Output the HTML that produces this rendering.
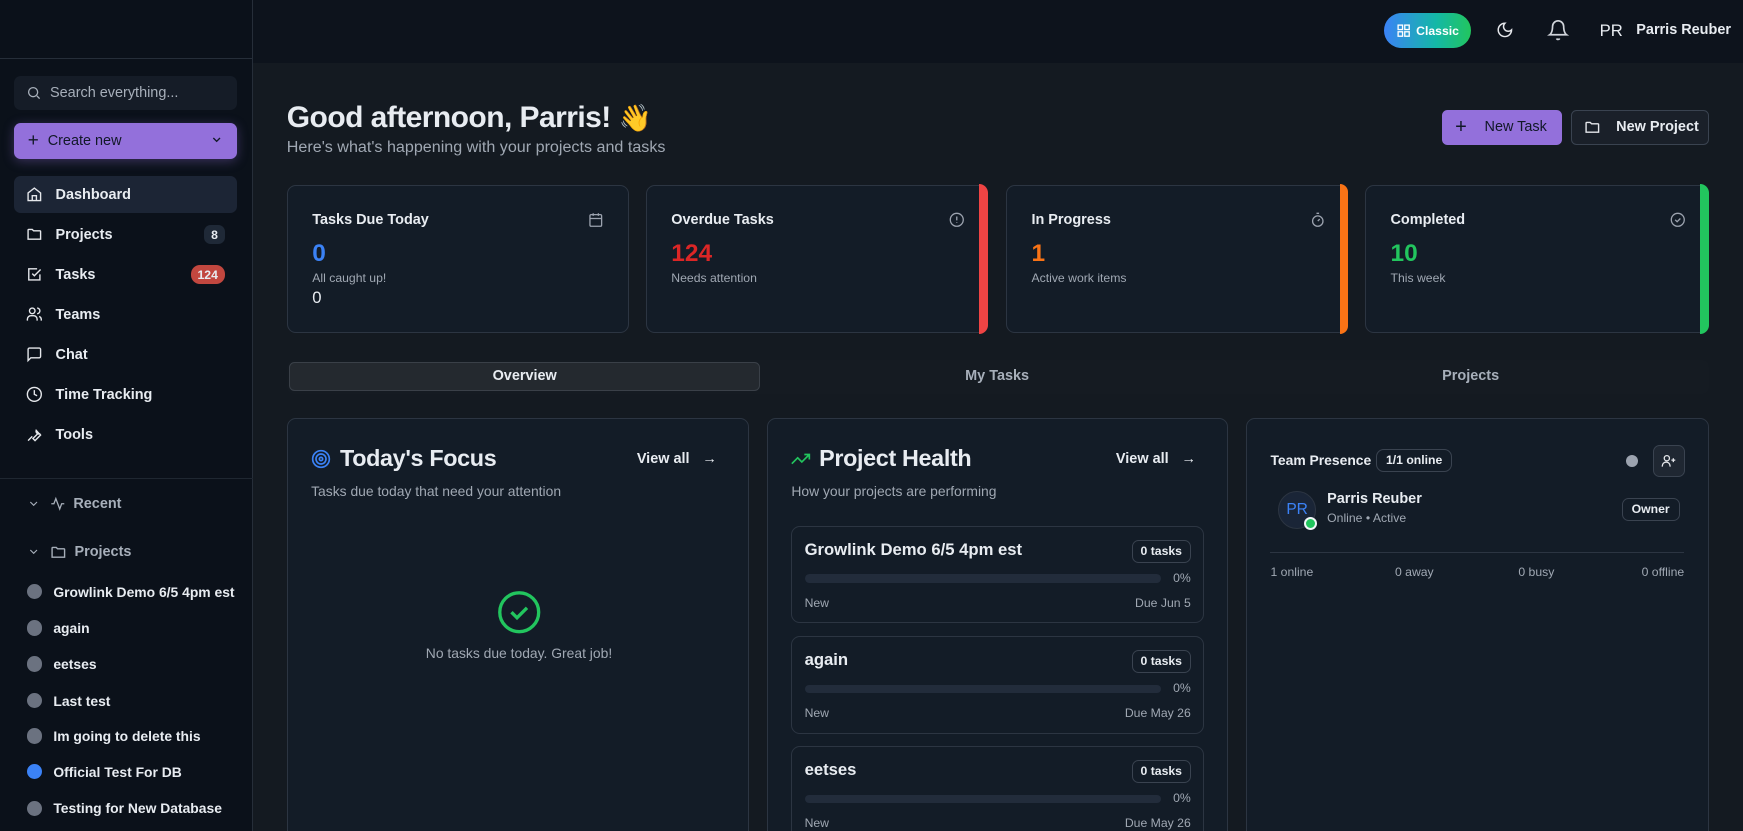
<!DOCTYPE html>
<html><head><meta charset="utf-8"><style>
*{box-sizing:border-box;margin:0;padding:0}
html,body{width:1743px;height:831px;overflow:hidden;background:#131920}
#z{zoom:1.11161;width:1568px;height:748px;position:relative;font-family:"Liberation Sans",sans-serif;color:#e8ecf1;background:#141a21;overflow:hidden}
.a{position:absolute}
.sb{left:0;top:0;width:228px;height:748px;background:#0b111a;border-right:1px solid #262e39}
.ni{position:absolute;left:13px;width:200px;height:34px;display:flex;align-items:center;font-size:13px;font-weight:bold;padding-left:10px}
.ni svg{margin-right:12px}
.pi{position:absolute;left:24px;font-size:12.5px;font-weight:bold;display:flex;align-items:center;white-space:nowrap}
.pi i{width:14px;height:14px;border-radius:50%;background:#6b7280;margin-right:10px;display:inline-block}
.card{background:#131c27;border:1px solid #2c3542;border-radius:8px;position:absolute}
.ct{font-size:13px;font-weight:bold;position:absolute;left:22px;top:24px}
.cn{font-size:22px;font-weight:bold;position:absolute;left:22px;top:49px}
.cs{font-size:11px;color:#a0a8b3;position:absolute;left:22px;top:77px}
.bar{position:absolute;right:-1px;top:-1px;bottom:-1px;width:8px;border-radius:0 8px 8px 0}
.ico{position:absolute;right:22px;top:24px}
.ph{position:absolute;left:21px;right:21px;height:88px;border:1px solid #2c3542;border-radius:8px}
.ph .n{position:absolute;left:11px;top:12px;font-size:15px;font-weight:bold}
.ph .b{position:absolute;right:11px;top:12px;font-size:11px;font-weight:bold;border:1px solid #3a4350;border-radius:6px;padding:3px 7px}
.ph .p{position:absolute;left:11px;right:38px;top:43px;height:8px;border-radius:4px;background:#222c3b}
.ph .pc{position:absolute;right:11px;top:40px;font-size:11px;color:#a0a8b3}
.ph .l{position:absolute;left:11px;top:62px;font-size:11px;color:#a0a8b3}
.ph .r{position:absolute;right:11px;top:62px;font-size:11px;color:#a0a8b3}
</style></head><body><div id="z">
<div class="a" style="left:228px;top:0;width:1340px;height:57px;background:#0d131c"></div>
<div class="a" style="left:1245px;top:12px;width:78px;height:31px;border-radius:16px;background:linear-gradient(90deg,#3b82f6,#14b8a6 60%,#22c55e);font-size:11px;font-weight:bold;display:flex;align-items:center;padding-left:12px;color:#fff">
<svg width="12" height="12" viewBox="0 0 12 12" fill="none" stroke="#fff" stroke-width="1.2" style="margin-right:5px"><rect x="1" y="1" width="4" height="4"/><rect x="7" y="1" width="4" height="4"/><rect x="1" y="7" width="4" height="4"/><rect x="7" y="7" width="4" height="4"/></svg>Classic</div>
<svg class="a" style="left:1346px;top:19px" width="16" height="16" viewBox="0 0 24 24" fill="none" stroke="#e5e7eb" stroke-width="2"><path d="M12 3a6 6 0 0 0 9 9 9 9 0 1 1-9-9z"/></svg>
<svg class="a" style="left:1392px;top:17px" width="20" height="20" viewBox="0 0 24 24" fill="none" stroke="#d1d5db" stroke-width="1.8"><path d="M6 8a6 6 0 0 1 12 0c0 7 3 9 3 9H3s3-2 3-9"/><path d="M10.3 21a1.9 1.9 0 0 0 3.4 0"/></svg>
<div class="a" style="left:1439px;top:19px;font-size:15px">PR</div>
<div class="a" style="left:1472px;top:20px;font-size:13px;font-weight:bold">Parris Reuber</div>
<div class="a sb"></div>
<div class="a" style="left:0;top:52px;width:228px;border-top:1px solid #262e39"></div>
<div class="a" style="left:13px;top:68px;width:200px;height:31px;background:#151c27;border-radius:6px;display:flex;align-items:center;padding-left:10px;font-size:13px;color:#a7afba">
<svg width="14" height="14" viewBox="0 0 24 24" fill="none" stroke="#a7afba" stroke-width="2" style="margin-right:8px"><circle cx="11" cy="11" r="7"/><path d="M21 21l-4.3-4.3"/></svg>Search everything...</div>
<div class="a" style="left:13px;top:111px;width:200px;height:32px;background:#9370db;border-radius:6px;display:flex;align-items:center;padding-left:12px;font-size:13px;color:#111827;box-shadow:0 2px 10px rgba(147,112,219,.35)">
<span style="font-size:17px;margin-right:8px">+</span>Create new<span style="position:absolute;right:12px;top:9px"><svg width="12" height="12" viewBox="0 0 24 24" fill="none" stroke="#111827" stroke-width="2.5"><path d="M6 9l6 6 6-6"/></svg></span></div>
<div class="ni" style="top:158px;background:#1c2535;border-radius:6px"><svg width="15" height="15" viewBox="0 0 24 24" fill="none" stroke="#e5e7eb" stroke-width="2"><path d="M3 10l9-7 9 7v11H3z"/><path d="M9 21v-7h6v7"/></svg>Dashboard</div>
<div class="ni" style="top:194px"><svg width="15" height="15" viewBox="0 0 24 24" fill="none" stroke="#e5e7eb" stroke-width="2"><path d="M3 6a1 1 0 0 1 1-1h5l2 2h9a1 1 0 0 1 1 1v11H3z"/></svg>Projects<span style="position:absolute;right:11px;background:#1f2937;border-radius:6px;padding:2px 6px;font-size:11px">8</span></div>
<div class="ni" style="top:230px"><svg width="15" height="15" viewBox="0 0 24 24" fill="none" stroke="#e5e7eb" stroke-width="2"><path d="M20 12v8H4V4h12"/><path d="M9 11l3 3 9-9"/></svg>Tasks<span style="position:absolute;right:11px;background:#c2473f;border-radius:8px;padding:2px 6px;font-size:11px">124</span></div>
<div class="ni" style="top:266px"><svg width="15" height="15" viewBox="0 0 24 24" fill="none" stroke="#e5e7eb" stroke-width="2"><circle cx="9" cy="7" r="4"/><path d="M2 21v-2a5 5 0 0 1 5-5h4a5 5 0 0 1 5 5v2M16 3a4 4 0 0 1 0 8M22 21v-2a5 5 0 0 0-3-4"/></svg>Teams</div>
<div class="ni" style="top:302px"><svg width="15" height="15" viewBox="0 0 24 24" fill="none" stroke="#e5e7eb" stroke-width="2"><path d="M21 15a2 2 0 0 1-2 2H7l-4 4V5a2 2 0 0 1 2-2h14a2 2 0 0 1 2 2z"/></svg>Chat</div>
<div class="ni" style="top:338px"><svg width="15" height="15" viewBox="0 0 24 24" fill="none" stroke="#e5e7eb" stroke-width="2"><circle cx="12" cy="12" r="10"/><path d="M12 6v6l4 2"/></svg>Time Tracking</div>
<div class="ni" style="top:374px"><svg width="15" height="15" viewBox="0 0 24 24" fill="none" stroke="#e5e7eb" stroke-width="2"><path d="M14.7 6.3a4 4 0 0 0 5 5L21 13l-8 8-3-3 8-8zM3 21l6-6"/></svg>Tools</div>
<div class="a" style="left:0;top:430px;width:228px;border-top:1px solid #1f2731"></div>
<div class="a" style="left:24px;top:446px;font-size:13px;color:#a7afba;font-weight:bold;display:flex;align-items:center">
<svg width="12" height="12" viewBox="0 0 24 24" fill="none" stroke="#a7afba" stroke-width="2" style="margin-right:9px"><path d="M6 9l6 6 6-6"/></svg><svg width="14" height="14" viewBox="0 0 24 24" fill="none" stroke="#a7afba" stroke-width="2" style="margin-right:7px"><path d="M2 12h4l3-8 6 16 3-8h4"/></svg>Recent</div>
<div class="a" style="left:24px;top:489px;font-size:13px;color:#a7afba;font-weight:bold;display:flex;align-items:center">
<svg width="12" height="12" viewBox="0 0 24 24" fill="none" stroke="#a7afba" stroke-width="2" style="margin-right:9px"><path d="M6 9l6 6 6-6"/></svg><svg width="15" height="15" viewBox="0 0 24 24" fill="none" stroke="#a7afba" stroke-width="2" style="margin-right:7px"><path d="M3 6a1 1 0 0 1 1-1h5l2 2h9a1 1 0 0 1 1 1v11H3z"/></svg>Projects</div>
<div class="pi" style="top:525px"><i></i>Growlink Demo 6/5 4pm est</div>
<div class="pi" style="top:558px"><i></i>again</div>
<div class="pi" style="top:590px"><i></i>eetses</div>
<div class="pi" style="top:623px"><i></i>Last test</div>
<div class="pi" style="top:655px"><i></i>Im going to delete this</div>
<div class="pi" style="top:687px"><i style="background:#3b82f6"></i>Official Test For DB</div>
<div class="pi" style="top:720px"><i></i>Testing for New Database</div>
<div class="a" style="left:258px;top:86px;font-size:27px;font-weight:bold;letter-spacing:-0.5px">Good afternoon, Parris! <span style="font-family:'Noto Sans CJK JP',sans-serif;font-size:24px">👋</span></div>
<div class="a" style="left:258px;top:124px;font-size:14.5px;color:#a0a8b3">Here's what's happening with your projects and tasks</div>
<div class="a" style="left:1297px;top:99px;width:108px;height:31px;background:#9370db;border-radius:5px;display:flex;align-items:center;padding-left:12px;font-size:13px;color:#111827"><span style="font-size:18px;margin-right:16px">+</span>New Task</div>
<div class="a" style="left:1413px;top:99px;width:124px;height:31px;background:#1a2029;border:1px solid #3a4350;border-radius:5px;display:flex;align-items:center;padding-left:11px;font-size:13px;font-weight:bold">
<svg width="15" height="15" viewBox="0 0 24 24" fill="none" stroke="#e5e7eb" stroke-width="2" style="margin-right:14px"><path d="M3 6a1 1 0 0 1 1-1h5l2 2h9a1 1 0 0 1 1 1v11H3z"/></svg>New Project</div>
<div class="card" style="left:258px;top:166px;width:308px;height:134px"><div class="ct">Tasks Due Today</div><div class="cn" style="color:#3b82f6">0</div><div class="cs">All caught up!</div><div class="a" style="left:22px;top:92px;font-size:15px">0</div>
<svg class="ico" width="14" height="14" viewBox="0 0 24 24" fill="none" stroke="#9ca3af" stroke-width="2"><rect x="3" y="4" width="18" height="18" rx="2"/><path d="M3 10h18M8 2v4M16 2v4"/></svg></div>
<div class="card" style="left:581px;top:166px;width:308px;height:134px"><div class="ct">Overdue Tasks</div><div class="cn" style="color:#dc2626">124</div><div class="cs">Needs attention</div><div class="bar" style="background:#ef4444"></div>
<svg class="ico" style="right:20px" width="14" height="14" viewBox="0 0 24 24" fill="none" stroke="#9ca3af" stroke-width="2"><circle cx="12" cy="12" r="10"/><path d="M12 7v6M12 16v1"/></svg></div>
<div class="card" style="left:905px;top:166px;width:308px;height:134px"><div class="ct">In Progress</div><div class="cn" style="color:#f97316">1</div><div class="cs">Active work items</div><div class="bar" style="background:#f97316"></div>
<svg class="ico" style="right:20px" width="14" height="14" viewBox="0 0 24 24" fill="none" stroke="#9ca3af" stroke-width="2"><circle cx="12" cy="14" r="8"/><path d="M10 2h4M12 14l3-3"/></svg></div>
<div class="card" style="left:1228px;top:166px;width:309px;height:134px"><div class="ct">Completed</div><div class="cn" style="color:#22c55e">10</div><div class="cs">This week</div><div class="bar" style="background:#22c55e"></div>
<svg class="ico" style="right:20px" width="14" height="14" viewBox="0 0 24 24" fill="none" stroke="#9ca3af" stroke-width="2"><circle cx="12" cy="12" r="10"/><path d="M8 12l3 3 5-5"/></svg></div>
<div class="a" style="left:258px;top:324px;width:1279px;height:30px;background:#151b22;border-radius:6px"></div>
<div class="a" style="left:260px;top:326px;width:424px;height:26px;background:#24292f;border:1px solid #3a4048;border-radius:5px;text-align:center;line-height:24px;font-size:13px;font-weight:bold">Overview</div>
<div class="a" style="left:684px;top:331px;width:426px;text-align:center;font-size:13px;color:#a7afba;font-weight:bold">My Tasks</div>
<div class="a" style="left:1110px;top:331px;width:426px;text-align:center;font-size:13px;color:#a7afba;font-weight:bold">Projects</div>
<div class="card" style="left:258px;top:376px;width:416px;height:400px">
<svg class="a" style="left:21px;top:27px" width="18" height="18" viewBox="0 0 24 24" fill="none" stroke="#3b82f6" stroke-width="2"><circle cx="12" cy="12" r="10"/><circle cx="12" cy="12" r="6"/><circle cx="12" cy="12" r="2"/></svg>
<div class="a" style="left:47px;top:23px;font-size:21px;font-weight:bold;letter-spacing:-0.3px">Today's Focus</div>
<div class="a" style="left:314px;top:29px;font-size:13px;font-weight:bold">View all <span style="margin-left:8px">→</span></div>
<div class="a" style="left:21px;top:58px;font-size:12.5px;color:#a0a8b3">Tasks due today that need your attention</div>
<svg class="a" style="left:188px;top:154px" width="40" height="40" viewBox="0 0 40 40" fill="none" stroke="#22c55e" stroke-width="3"><circle cx="20" cy="20" r="17.5"/><path d="M13 20l5 5 9-9"/></svg>
<div class="a" style="left:0;width:416px;top:203px;text-align:center;font-size:12.5px;color:#a0a8b3">No tasks due today. Great job!</div>
</div>
<div class="card" style="left:690px;top:376px;width:415px;height:400px">
<svg class="a" style="left:21px;top:30px" width="18" height="12" viewBox="0 0 24 16" fill="none" stroke="#22c55e" stroke-width="2"><path d="M1 14l7-7 5 5 9-9M16 3h6v6"/></svg>
<div class="a" style="left:46px;top:23px;font-size:21px;font-weight:bold;letter-spacing:-0.3px">Project Health</div>
<div class="a" style="left:313px;top:29px;font-size:13px;font-weight:bold">View all <span style="margin-left:8px">→</span></div>
<div class="a" style="left:21px;top:58px;font-size:12.5px;color:#a0a8b3">How your projects are performing</div>
<div class="ph" style="top:96px"><div class="n">Growlink Demo 6/5 4pm est</div><div class="b">0 tasks</div><div class="p"></div><div class="pc">0%</div><div class="l">New</div><div class="r">Due Jun 5</div></div>
<div class="ph" style="top:195px"><div class="n">again</div><div class="b">0 tasks</div><div class="p"></div><div class="pc">0%</div><div class="l">New</div><div class="r">Due May 26</div></div>
<div class="ph" style="top:294px"><div class="n">eetses</div><div class="b">0 tasks</div><div class="p"></div><div class="pc">0%</div><div class="l">New</div><div class="r">Due May 26</div></div>
</div>
<div class="card" style="left:1121px;top:376px;width:416px;height:400px">
<div class="a" style="left:21px;top:30px;font-size:12.5px;font-weight:bold">Team Presence</div>
<div class="a" style="left:116px;top:27px;font-size:11px;font-weight:bold;border:1px solid #3a4350;border-radius:7px;padding:3px 8px">1/1 online</div>
<div class="a" style="left:341px;top:32px;width:11px;height:11px;border-radius:50%;background:#9ca3af"></div>
<div class="a" style="left:365px;top:23px;width:29px;height:29px;border:1px solid #3a4350;border-radius:6px;background:#1f2732;display:flex;align-items:center;justify-content:center">
<svg width="14" height="14" viewBox="0 0 24 24" fill="none" stroke="#e5e7eb" stroke-width="2"><circle cx="9" cy="8" r="4"/><path d="M2 21v-1a6 6 0 0 1 12 0v1M19 8v6M16 11h6"/></svg></div>
<div class="a" style="left:28px;top:65px;width:34px;height:34px;border-radius:50%;background:#1a2537;border:1px solid #2c3542;color:#3b82f6;font-size:14px;text-align:center;line-height:33px">PR</div>
<div class="a" style="left:51px;top:88px;width:12px;height:12px;border-radius:50%;background:#22c55e;border:2px solid #f1f5f9"></div>
<div class="a" style="left:72px;top:65px;font-size:13px;font-weight:bold">Parris Reuber</div>
<div class="a" style="left:72px;top:83px;font-size:11px;color:#a0a8b3">Online • Active</div>
<div class="a" style="left:337px;top:71px;font-size:11px;font-weight:bold;border:1px solid #3a4350;border-radius:6px;padding:3px 8px">Owner</div>
<div class="a" style="left:21px;right:21px;top:120px;border-top:1px solid #2c3542"></div>
<div class="a" style="left:21px;top:131px;font-size:11px;color:#a0a8b3">1 online</div>
<div class="a" style="left:133px;top:131px;font-size:11px;color:#a0a8b3">0 away</div>
<div class="a" style="left:244px;top:131px;font-size:11px;color:#a0a8b3">0 busy</div>
<div class="a" style="right:21px;top:131px;font-size:11px;color:#a0a8b3">0 offline</div>
</div>
</div></body></html>
